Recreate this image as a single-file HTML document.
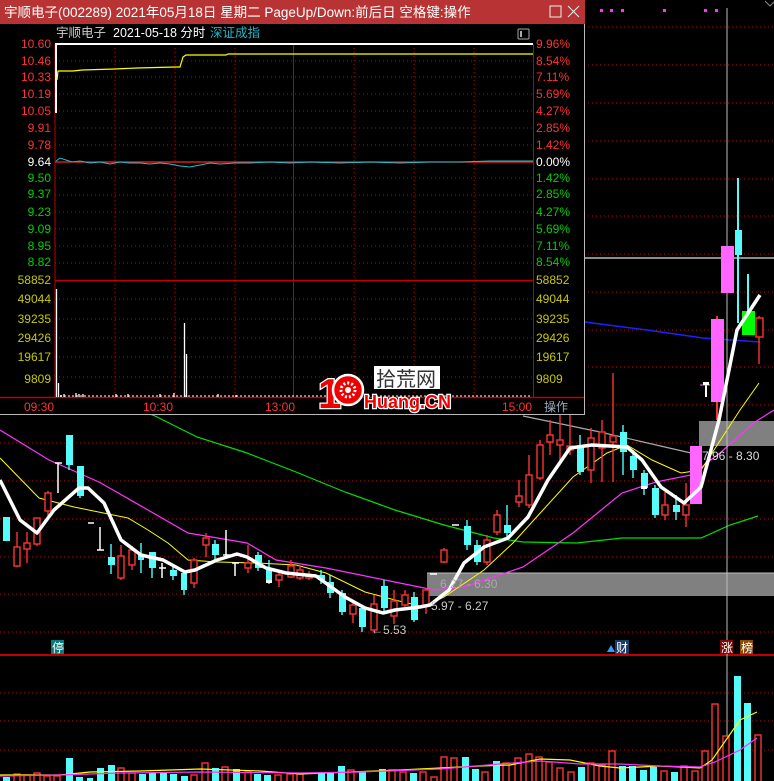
<!DOCTYPE html>
<html><head><meta charset="utf-8">
<style>
html,body{margin:0;padding:0;background:#000;width:774px;height:781px;overflow:hidden}
svg{display:block;font-family:"Liberation Sans","Noto Sans CJK SC",sans-serif}
.d{stroke:#c00000;stroke-width:1;stroke-dasharray:1 3}
.r rect{fill:#000;stroke:#ff3232;stroke-width:1.4}
.r line{stroke:#ff3232;stroke-width:1.4}
.c rect{fill:#54fcfc}
.c line{stroke:#54fcfc;stroke-width:1.4}
.w line{stroke:#fff;stroke-width:1.5}
.v rect{fill:#000;stroke:#ff3232;stroke-width:1.4}
.vc rect{fill:#54fcfc}
</style></head><body>
<svg width="774" height="781" viewBox="0 0 774 781" xmlns="http://www.w3.org/2000/svg">
<rect width="774" height="781" fill="#000"/>
<g class="d">
<line x1="0" y1="27" x2="774" y2="27"/><line x1="0" y1="65" x2="774" y2="65"/><line x1="0" y1="103" x2="774" y2="103"/>
<line x1="0" y1="141" x2="774" y2="141"/><line x1="0" y1="179" x2="774" y2="179"/><line x1="0" y1="216" x2="774" y2="216"/>
<line x1="0" y1="254" x2="774" y2="254"/><line x1="0" y1="292" x2="774" y2="292"/><line x1="0" y1="330" x2="774" y2="330"/>
<line x1="0" y1="367" x2="774" y2="367"/><line x1="0" y1="405" x2="774" y2="405"/><line x1="0" y1="443" x2="774" y2="443"/>
<line x1="0" y1="481" x2="774" y2="481"/><line x1="0" y1="519" x2="774" y2="519"/><line x1="0" y1="557" x2="774" y2="557"/>
<line x1="0" y1="594" x2="774" y2="594"/><line x1="0" y1="632" x2="774" y2="632"/>
<line x1="0" y1="693" x2="774" y2="693"/><line x1="0" y1="721" x2="774" y2="721"/><line x1="0" y1="750" x2="774" y2="750"/>
</g>
<line x1="0" y1="655" x2="774" y2="655" stroke="#c00000" stroke-width="2"/>
<g fill="#ff33ff"><rect x="600" y="9" width="3" height="3"/><rect x="610" y="9" width="3" height="3"/><rect x="621" y="9" width="3" height="3"/><rect x="663" y="9" width="3" height="3"/><rect x="704" y="9" width="3" height="3"/><rect x="715" y="9" width="3" height="3"/></g>
<path d="M765 1 l5 5 l5 -5" stroke="#888" fill="none"/>
<rect x="699" y="421" width="75" height="25" fill="#808080"/>
<rect x="427" y="573" width="347" height="23" fill="#808080"/>
<line x1="427" y1="573" x2="774" y2="573" stroke="#bbb"/>
<polyline fill="none" stroke="#00e000" stroke-width="1.2" points="100,395 155,416 197,437 247,453 296,472 345,492 395,510 444,525 494,538 523,542 577,543 622,538 701,538 730,525 758,516"/>
<polyline fill="none" stroke="#aaa" stroke-width="1.2" points="523,416 600,432 691,453"/>
<polyline fill="none" stroke="#ff33ff" stroke-width="1.2" points="0,430 49,460 99,482 148,510 188,533 247,543 276,560 326,568 385,580 434,590 464,587 523,567 573,533 622,493 656,482 691,475 720,453 755,422 774,410"/>
<polyline fill="none" stroke="#ffff00" stroke-width="1" points="0,458 39,498 74,507 128,518 148,530 168,543 188,560 217,562 257,563 296,565 326,573 365,592 395,600 424,607 444,597 484,570 513,543 543,510 573,477 607,453 627,445 652,460 681,473 701,470 740,410 759,383"/>
<polyline fill="none" stroke="#2020ff" stroke-width="1.5" points="585,322 647,330 703,338 760,342"/>
<line x1="585" y1="258" x2="774" y2="258" stroke="#bbb" stroke-width="1.5"/>
<line x1="727" y1="8" x2="727" y2="781" stroke="#bbb" stroke-width="1"/>
<g class="c"><line x1="6" y1="517" x2="6" y2="541"/><rect x="3" y="517" width="7" height="24"/></g>
<g class="r"><line x1="17" y1="532" x2="17" y2="567"/><rect x="14" y="547" width="6" height="19"/></g>
<g class="r"><line x1="27" y1="532" x2="27" y2="563"/><rect x="24" y="543" width="6" height="6"/></g>
<g class="r"><line x1="37" y1="518" x2="37" y2="546"/><rect x="34" y="518" width="6" height="26"/></g>
<g class="r"><line x1="48" y1="491" x2="48" y2="516"/><rect x="45" y="493" width="6" height="18"/></g>
<g class="w"><line x1="58" y1="463" x2="58" y2="493"/><line x1="55" y1="463" x2="62" y2="463"/></g>
<g class="c"><line x1="69" y1="435" x2="69" y2="470"/><rect x="66" y="435" width="7" height="30"/></g>
<g class="c"><line x1="80" y1="466" x2="80" y2="498"/><rect x="77" y="466" width="7" height="30"/></g>
<g class="w"><line x1="88" y1="523" x2="94" y2="523"/></g>
<g class="w"><line x1="100" y1="527" x2="100" y2="550"/><line x1="97" y1="550" x2="104" y2="550"/></g>
<g class="c"><line x1="111" y1="544" x2="111" y2="574"/><rect x="108" y="557" width="7" height="8"/></g>
<g class="r"><line x1="121" y1="545" x2="121" y2="580"/><rect x="118" y="556" width="6" height="22"/></g>
<g class="r"><line x1="132" y1="546" x2="132" y2="570"/><rect x="129" y="550" width="6" height="15"/></g>
<g class="c"><line x1="141" y1="543" x2="141" y2="573"/><rect x="138" y="555" width="6" height="5"/></g>
<g class="c"><line x1="152" y1="552" x2="152" y2="578"/><rect x="149" y="552" width="7" height="16"/></g>
<g class="w"><line x1="162" y1="563" x2="162" y2="578"/><line x1="159" y1="568" x2="166" y2="568"/></g>
<g class="c"><line x1="173" y1="566" x2="173" y2="580"/><rect x="170" y="570" width="7" height="6"/></g>
<g class="c"><line x1="184" y1="573" x2="184" y2="595"/><rect x="181" y="573" width="6" height="17"/></g>
<g class="r"><line x1="194" y1="558" x2="194" y2="588"/><rect x="191" y="560" width="6" height="23"/></g>
<g class="r"><line x1="206" y1="533" x2="206" y2="557"/><rect x="203" y="538" width="6" height="7"/></g>
<g class="c"><line x1="215" y1="540" x2="215" y2="560"/><rect x="212" y="544" width="7" height="11"/></g>
<g class="w"><line x1="226" y1="530" x2="226" y2="555"/><line x1="223" y1="555" x2="230" y2="555"/></g>
<g class="w"><line x1="235" y1="563" x2="235" y2="576"/><line x1="232" y1="563" x2="239" y2="563"/></g>
<g class="r"><line x1="248" y1="545" x2="248" y2="573"/><rect x="245" y="563" width="6" height="5"/></g>
<g class="c"><line x1="258" y1="552" x2="258" y2="571"/><rect x="255" y="555" width="7" height="13"/></g>
<g class="c"><line x1="269" y1="560" x2="269" y2="584"/><rect x="266" y="568" width="6" height="13"/></g>
<rect x="266" y="580" width="6" height="3" fill="#fff"/>
<g class="r"><line x1="279" y1="570" x2="279" y2="587"/><rect x="276" y="575" width="6" height="5"/></g>
<g class="r"><line x1="291" y1="560" x2="291" y2="578"/><rect x="288" y="566" width="6" height="11"/></g>
<g class="r"><line x1="300" y1="566" x2="300" y2="580"/><rect x="297" y="570" width="6" height="8"/></g>
<g class="r"><line x1="309" y1="571" x2="309" y2="580"/><rect x="306" y="575" width="6" height="3"/></g>
<g class="c"><line x1="321" y1="570" x2="321" y2="584"/><rect x="318" y="575" width="7" height="5"/></g>
<g class="c"><line x1="330" y1="575" x2="330" y2="598"/><rect x="327" y="582" width="7" height="11"/></g>
<g class="c"><line x1="342" y1="590" x2="342" y2="615"/><rect x="339" y="593" width="7" height="19"/></g>
<g class="r"><line x1="353" y1="600" x2="353" y2="623"/><rect x="350" y="605" width="6" height="9"/></g>
<g class="c"><line x1="362" y1="605" x2="362" y2="632"/><rect x="359" y="608" width="7" height="19"/></g>
<g class="r"><line x1="374" y1="595" x2="374" y2="632"/><rect x="371" y="604" width="6" height="26"/></g>
<g class="c"><line x1="384" y1="580" x2="384" y2="612"/><rect x="381" y="586" width="7" height="22"/></g>
<g class="r"><line x1="394" y1="590" x2="394" y2="624"/><rect x="391" y="601" width="6" height="15"/></g>
<g class="r"><line x1="405" y1="590" x2="405" y2="610"/><rect x="402" y="595" width="6" height="10"/></g>
<g class="c"><line x1="414" y1="592" x2="414" y2="622"/><rect x="411" y="597" width="7" height="23"/></g>
<g class="r"><line x1="426" y1="588" x2="426" y2="614"/><rect x="423" y="590" width="6" height="15"/></g>
<g class="w"><line x1="430" y1="574" x2="437" y2="574"/></g>
<g class="r"><line x1="444" y1="548" x2="444" y2="563"/><rect x="441" y="550" width="6" height="12"/></g>
<g class="w"><line x1="452" y1="525" x2="459" y2="525"/></g>
<g class="c"><line x1="467" y1="520" x2="467" y2="550"/><rect x="464" y="526" width="7" height="19"/></g>
<g class="c"><line x1="477" y1="540" x2="477" y2="565"/><rect x="474" y="545" width="7" height="17"/></g>
<g class="r"><line x1="487" y1="535" x2="487" y2="565"/><rect x="484" y="540" width="6" height="22"/></g>
<g class="r"><line x1="497" y1="510" x2="497" y2="535"/><rect x="494" y="515" width="6" height="17"/></g>
<g class="c"><line x1="507" y1="505" x2="507" y2="540"/><rect x="504" y="525" width="7" height="8"/></g>
<g class="r"><line x1="519" y1="480" x2="519" y2="507"/><rect x="516" y="496" width="6" height="6"/></g>
<g class="r"><line x1="529" y1="455" x2="529" y2="508"/><rect x="526" y="475" width="6" height="30"/></g>
<g class="r"><line x1="540" y1="440" x2="540" y2="480"/><rect x="537" y="445" width="6" height="33"/></g>
<g class="r"><line x1="550" y1="420" x2="550" y2="455"/><rect x="547" y="435" width="6" height="7"/></g>
<g class="r"><line x1="560" y1="413" x2="560" y2="460"/><rect x="557" y="440" width="6" height="5"/></g>
<g class="r"><line x1="570" y1="413" x2="570" y2="455"/><rect x="567" y="446" width="6" height="4"/></g>
<g class="c"><line x1="580" y1="435" x2="580" y2="475"/><rect x="577" y="446" width="7" height="26"/></g>
<g class="r"><line x1="591" y1="428" x2="591" y2="483"/><rect x="588" y="438" width="6" height="32"/></g>
<g class="r"><line x1="602" y1="420" x2="602" y2="482"/><rect x="599" y="432" width="6" height="16"/></g>
<g class="r"><line x1="613" y1="373" x2="613" y2="482"/><rect x="610" y="436" width="6" height="6"/></g>
<g class="c"><line x1="623" y1="425" x2="623" y2="475"/><rect x="620" y="432" width="7" height="20"/></g>
<g class="c"><line x1="633" y1="450" x2="633" y2="478"/><rect x="630" y="456" width="7" height="14"/></g>
<g class="c"><line x1="644" y1="470" x2="644" y2="495"/><rect x="641" y="473" width="7" height="15"/></g>
<rect x="641" y="486" width="6" height="3" fill="#fff"/>
<g class="c"><line x1="655" y1="485" x2="655" y2="518"/><rect x="652" y="488" width="7" height="27"/></g>
<g class="r"><line x1="665" y1="492" x2="665" y2="520"/><rect x="662" y="505" width="6" height="10"/></g>
<g class="c"><line x1="676" y1="495" x2="676" y2="520"/><rect x="673" y="505" width="7" height="7"/></g>
<g class="r"><line x1="686" y1="483" x2="686" y2="527"/><rect x="683" y="505" width="6" height="10"/></g>
<rect x="690" y="446" width="12" height="58" fill="#ff66ff"/>
<line x1="706" y1="383" x2="706" y2="397" stroke="#fff" stroke-width="2"/>
<line x1="700" y1="385" x2="710" y2="385" stroke="#ff66ff" stroke-width="1"/>
<rect x="703" y="382" width="6" height="3" fill="#fff"/>
<line x1="717" y1="316" x2="717" y2="420" stroke="#ff3232" stroke-width="2"/>
<rect x="711" y="319" width="13" height="83" fill="#ff66ff"/>
<rect x="721" y="246" width="13" height="47" fill="#ff66ff"/>
<line x1="738" y1="178" x2="738" y2="323" stroke="#54fcfc" stroke-width="2"/>
<rect x="735" y="230" width="7" height="25" fill="#54fcfc"/>
<line x1="748" y1="274" x2="748" y2="312" stroke="#54fcfc" stroke-width="2"/>
<rect x="742" y="311" width="13" height="24" fill="#00ff00"/>
<g class="r"><line x1="759" y1="316" x2="759" y2="364"/><rect x="756" y="318" width="7" height="19"/></g>
<polyline fill="none" stroke="#fff" stroke-width="3.5" stroke-linejoin="round" points="0,480 20,520 37,533 54,510 79,488 88,488 104,503 121,540 141,555 163,560 185,572 195,570 217,560 237,554 247,557 266,568 286,573 316,576 345,597 365,608 383,613 395,610 420,607 430,605 449,590 464,563 484,547 508,538 528,517 548,480 570,448 592,445 627,447 642,460 661,487 684,503 701,487 719,420 737,330 760,295"/>
<g font-size="12" fill="#c8c8c8">
<text x="440" y="588" fill="#aaa">6.27 - 6.30</text>
<text x="431" y="610">5.97 - 6.27</text>
<text x="371" y="634">←5.53</text>
<text x="702" y="460" fill="#ddd">7.96 - 8.30</text>
</g>
<rect x="51" y="640" width="13" height="14" fill="#0a7a7a"/><text x="52" y="652" font-size="12" fill="#fff">停</text>
<path d="M607 652 l4 -7 l4 7z" fill="#3399ff"/><rect x="615" y="640" width="14" height="14" fill="#1a3a6a"/><text x="616" y="652" font-size="12" fill="#fff">财</text>
<rect x="720" y="640" width="13" height="14" fill="#7a0a0a"/><text x="721" y="652" font-size="12" fill="#fff">涨</text>
<rect x="740" y="640" width="13" height="14" fill="#8a4a0a"/><text x="741" y="652" font-size="12" fill="#fff">榜</text>
<g class="vc"><rect x="3" y="777" width="7" height="4"/><rect x="66" y="758" width="7" height="23"/><rect x="76" y="777" width="7" height="4"/><rect x="87" y="778" width="6" height="3"/><rect x="97" y="768" width="7" height="13"/><rect x="108" y="765" width="7" height="16"/><rect x="139" y="774" width="7" height="7"/><rect x="149" y="773" width="7" height="8"/><rect x="160" y="773" width="7" height="8"/><rect x="170" y="774" width="7" height="7"/><rect x="181" y="776" width="7" height="5"/><rect x="212" y="768" width="7" height="13"/><rect x="233" y="769" width="7" height="12"/><rect x="254" y="774" width="7" height="7"/><rect x="264" y="775" width="7" height="6"/><rect x="318" y="772" width="7" height="9"/><rect x="327" y="772" width="7" height="9"/><rect x="338" y="766" width="7" height="15"/><rect x="359" y="772" width="7" height="9"/><rect x="379" y="769" width="7" height="12"/><rect x="410" y="773" width="7" height="8"/><rect x="462" y="757" width="7" height="24"/><rect x="472" y="769" width="7" height="12"/><rect x="493" y="761" width="7" height="20"/><rect x="578" y="767" width="7" height="14"/><rect x="619" y="766" width="7" height="15"/><rect x="629" y="766" width="7" height="15"/><rect x="640" y="770" width="7" height="11"/><rect x="650" y="767" width="7" height="14"/><rect x="671" y="772" width="7" height="9"/><rect x="734" y="676" width="7" height="105"/><rect x="744" y="703" width="7" height="78"/></g>
<g class="v"><rect x="14" y="774" width="6" height="8"/><rect x="24" y="775" width="6" height="7"/><rect x="34" y="773" width="6" height="9"/><rect x="44" y="776" width="6" height="6"/><rect x="54" y="776" width="6" height="6"/><rect x="118" y="768" width="6" height="14"/><rect x="129" y="773" width="6" height="9"/><rect x="191" y="775" width="6" height="7"/><rect x="202" y="763" width="6" height="19"/><rect x="222" y="767" width="6" height="15"/><rect x="245" y="772" width="6" height="10"/><rect x="275" y="775" width="6" height="7"/><rect x="287" y="774" width="6" height="8"/><rect x="297" y="774" width="6" height="8"/><rect x="348" y="770" width="6" height="12"/><rect x="389" y="770" width="6" height="12"/><rect x="400" y="772" width="6" height="10"/><rect x="420" y="772" width="6" height="10"/><rect x="431" y="777" width="6" height="5"/><rect x="441" y="757" width="6" height="25"/><rect x="451" y="758" width="6" height="24"/><rect x="482" y="772" width="6" height="10"/><rect x="503" y="763" width="6" height="19"/><rect x="515" y="758" width="6" height="24"/><rect x="526" y="754" width="6" height="28"/><rect x="536" y="757" width="6" height="25"/><rect x="546" y="762" width="6" height="20"/><rect x="557" y="768" width="6" height="14"/><rect x="568" y="772" width="6" height="10"/><rect x="588" y="763" width="6" height="19"/><rect x="599" y="765" width="6" height="17"/><rect x="609" y="751" width="6" height="31"/><rect x="661" y="771" width="6" height="11"/><rect x="681" y="766" width="6" height="16"/><rect x="692" y="771" width="6" height="11"/><rect x="702" y="751" width="6" height="31"/><rect x="712" y="704" width="6" height="78"/><rect x="723" y="736" width="6" height="46"/><rect x="755" y="735" width="6" height="47"/></g>
<polyline fill="none" stroke="#ffff00" stroke-width="1.2" points="0,775 60,775 90,772 140,771 200,769 260,771 300,774 350,772 400,770 440,768 480,766 510,765 540,759 570,760 600,766 620,768 660,766 700,768 712,760 740,720 757,712"/>
<polyline fill="none" stroke="#ff33ff" stroke-width="1.2" points="0,776 60,775 120,773 200,772 300,773 360,772 440,769 500,764 540,761 580,764 620,764 660,766 700,767 715,762 740,750 757,738"/>
<rect x="0" y="0" width="585" height="415" fill="#000"/>
<rect x="0" y="0" width="585" height="24" fill="#b83434"/>
<text x="4" y="17" font-size="13.5" fill="#fff">宇顺电子(002289) 2021年05月18日 星期二 PageUp/Down:前后日 空格键:操作</text>
<rect x="550" y="6" width="11" height="11" fill="none" stroke="#eee" stroke-width="1"/>
<path d="M568 6 l11 11 M579 6 l-11 11" stroke="#eee" stroke-width="1"/>
<line x1="584.5" y1="24" x2="584.5" y2="415" stroke="#bbb"/>
<line x1="0" y1="414.5" x2="585" y2="414.5" stroke="#bbb"/>
<text x="56" y="37" font-size="12.5" fill="#ccc">宇顺电子</text>
<text x="113" y="37" font-size="12.5" fill="#fff">2021-05-18 分时</text>
<text x="210" y="37" font-size="12.5" fill="#1fb8c8">深证成指</text>
<rect x="518" y="29" width="11" height="10" fill="none" stroke="#aaa" rx="1"/><rect x="520" y="31" width="2" height="6" fill="#aaa"/>
<g class="d">
<line x1="55" y1="61" x2="533" y2="61"/><line x1="55" y1="77" x2="533" y2="77"/><line x1="55" y1="94" x2="533" y2="94"/><line x1="55" y1="111" x2="533" y2="111"/><line x1="55" y1="128" x2="533" y2="128"/><line x1="55" y1="145" x2="533" y2="145"/><line x1="55" y1="178" x2="533" y2="178"/><line x1="55" y1="195" x2="533" y2="195"/><line x1="55" y1="212" x2="533" y2="212"/><line x1="55" y1="229" x2="533" y2="229"/><line x1="55" y1="246" x2="533" y2="246"/><line x1="55" y1="263" x2="533" y2="263"/>
<line x1="55" y1="299" x2="533" y2="299"/><line x1="55" y1="319" x2="533" y2="319"/><line x1="55" y1="338" x2="533" y2="338"/><line x1="55" y1="357" x2="533" y2="357"/><line x1="55" y1="377" x2="533" y2="377"/>
<line x1="115" y1="44" x2="115" y2="397"/><line x1="175" y1="44" x2="175" y2="397"/><line x1="235" y1="44" x2="235" y2="397"/><line x1="354" y1="44" x2="354" y2="397"/><line x1="414" y1="44" x2="414" y2="397"/><line x1="474" y1="44" x2="474" y2="397"/>
</g>
<line x1="55" y1="44" x2="55" y2="397" stroke="#c00000"/>
<line x1="533.5" y1="44" x2="533.5" y2="397" stroke="#c00000"/>
<line x1="293.5" y1="44" x2="293.5" y2="397" stroke="#c00000"/>
<line x1="55" y1="280.5" x2="533" y2="280.5" stroke="#c00000" stroke-width="1.5"/>
<line x1="0" y1="397.5" x2="584" y2="397.5" stroke="#c00000" stroke-width="1.5"/>
<line x1="55" y1="162" x2="533" y2="162" stroke="#ff2020" stroke-width="1.2"/>
<polyline fill="none" stroke="#20c0d0" stroke-width="1" points="56,161 60,158 66,160 72,162 80,161 90,163 100,162 110,164 120,162 130,163 140,163 150,164 160,163 170,164 180,166 190,167 200,165 210,163 220,164 235,163 250,163 270,162 290,163 310,162 340,163 370,162 400,163 430,162 460,162 490,161 520,161 533,161"/>
<polyline fill="none" stroke="#fff" stroke-width="2" points="56,113 56,44 533,44"/>
<polyline fill="none" stroke="#ffff00" stroke-width="1.2" points="57,80 58,71 73,71 82,70 115,69 137,68 175,67 180,67 183,57 186,55 226,55 228,54 533,54"/>
<g stroke="#fff" stroke-width="1.3">
<line x1="56.5" y1="289" x2="56.5" y2="397"/><line x1="58.5" y1="383" x2="58.5" y2="397"/><line x1="61" y1="395" x2="61" y2="397"/><line x1="64" y1="394" x2="64" y2="397"/><line x1="76" y1="393" x2="76" y2="397"/><line x1="79" y1="394" x2="79" y2="397"/><line x1="83" y1="394" x2="83" y2="397"/><line x1="116" y1="394" x2="116" y2="397"/><line x1="128" y1="394" x2="128" y2="397"/><line x1="160" y1="394" x2="160" y2="397"/><line x1="174" y1="393" x2="174" y2="397"/><line x1="184.5" y1="323" x2="184.5" y2="397"/><line x1="186.5" y1="354" x2="186.5" y2="397"/><line x1="218" y1="394" x2="218" y2="397"/><line x1="236" y1="395" x2="236" y2="397"/>
</g>
<line x1="60" y1="396" x2="530" y2="396" stroke="#fff" stroke-width="1" stroke-dasharray="2 2"/>
<g font-size="12" text-anchor="end">
<text x="51" y="48" fill="#ff3232">10.60</text><text x="51" y="65" fill="#ff3232">10.46</text><text x="51" y="81" fill="#ff3232">10.33</text><text x="51" y="98" fill="#ff3232">10.19</text><text x="51" y="115" fill="#ff3232">10.05</text><text x="51" y="132" fill="#ff3232">9.91</text><text x="51" y="149" fill="#ff3232">9.78</text><text x="51" y="166" fill="#fff">9.64</text><text x="51" y="182" fill="#00d000">9.50</text><text x="51" y="198" fill="#00d000">9.37</text><text x="51" y="216" fill="#00d000">9.23</text><text x="51" y="233" fill="#00d000">9.09</text><text x="51" y="250" fill="#00d000">8.95</text><text x="51" y="266" fill="#00d000">8.82</text>
<text x="51" y="284" fill="#c8c800">58852</text><text x="51" y="303" fill="#c8c800">49044</text><text x="51" y="323" fill="#c8c800">39235</text><text x="51" y="342" fill="#c8c800">29426</text><text x="51" y="361" fill="#c8c800">19617</text><text x="51" y="383" fill="#c8c800">9809</text>
</g>
<g font-size="12">
<text x="536" y="48" fill="#ff3232">9.96%</text><text x="536" y="65" fill="#ff3232">8.54%</text><text x="536" y="81" fill="#ff3232">7.11%</text><text x="536" y="98" fill="#ff3232">5.69%</text><text x="536" y="115" fill="#ff3232">4.27%</text><text x="536" y="132" fill="#ff3232">2.85%</text><text x="536" y="149" fill="#ff3232">1.42%</text><text x="536" y="166" fill="#fff">0.00%</text><text x="536" y="182" fill="#00d000">1.42%</text><text x="536" y="198" fill="#00d000">2.85%</text><text x="536" y="216" fill="#00d000">4.27%</text><text x="536" y="233" fill="#00d000">5.69%</text><text x="536" y="250" fill="#00d000">7.11%</text><text x="536" y="266" fill="#00d000">8.54%</text>
<text x="536" y="284" fill="#c8c800">58852</text><text x="536" y="303" fill="#c8c800">49044</text><text x="536" y="323" fill="#c8c800">39235</text><text x="536" y="342" fill="#c8c800">29426</text><text x="536" y="361" fill="#c8c800">19617</text><text x="536" y="383" fill="#c8c800">9809</text>
<text x="24" y="411" fill="#ff3232">09:30</text><text x="143" y="411" fill="#ff3232">10:30</text><text x="265" y="411" fill="#ff3232">13:00</text><text x="502" y="411" fill="#ff3232">15:00</text><text x="544" y="411" fill="#9ab">操作</text>
</g>
<!-- watermark -->
<text x="318" y="408" font-size="42" font-weight="bold" fill="#e00" stroke="#fff" stroke-width="2.5" paint-order="stroke" letter-spacing="-4">1</text>
<circle cx="348" cy="390" r="15" fill="#e00" stroke="#fff" stroke-width="2.5"/>
<circle cx="348" cy="390" r="7" fill="none" stroke="#fff" stroke-width="3" stroke-dasharray="2 2"/>
<circle cx="348" cy="390" r="3" fill="#fff"/>
<rect x="374" y="366" width="66" height="23" fill="#fff"/>
<text x="376" y="386" font-size="20" fill="#333">拾荒网</text>
<text x="364" y="408" font-size="18" font-weight="bold" fill="#e00" stroke="#fff" stroke-width="2.5" paint-order="stroke">Huang.CN</text>
</svg>
</body></html>
